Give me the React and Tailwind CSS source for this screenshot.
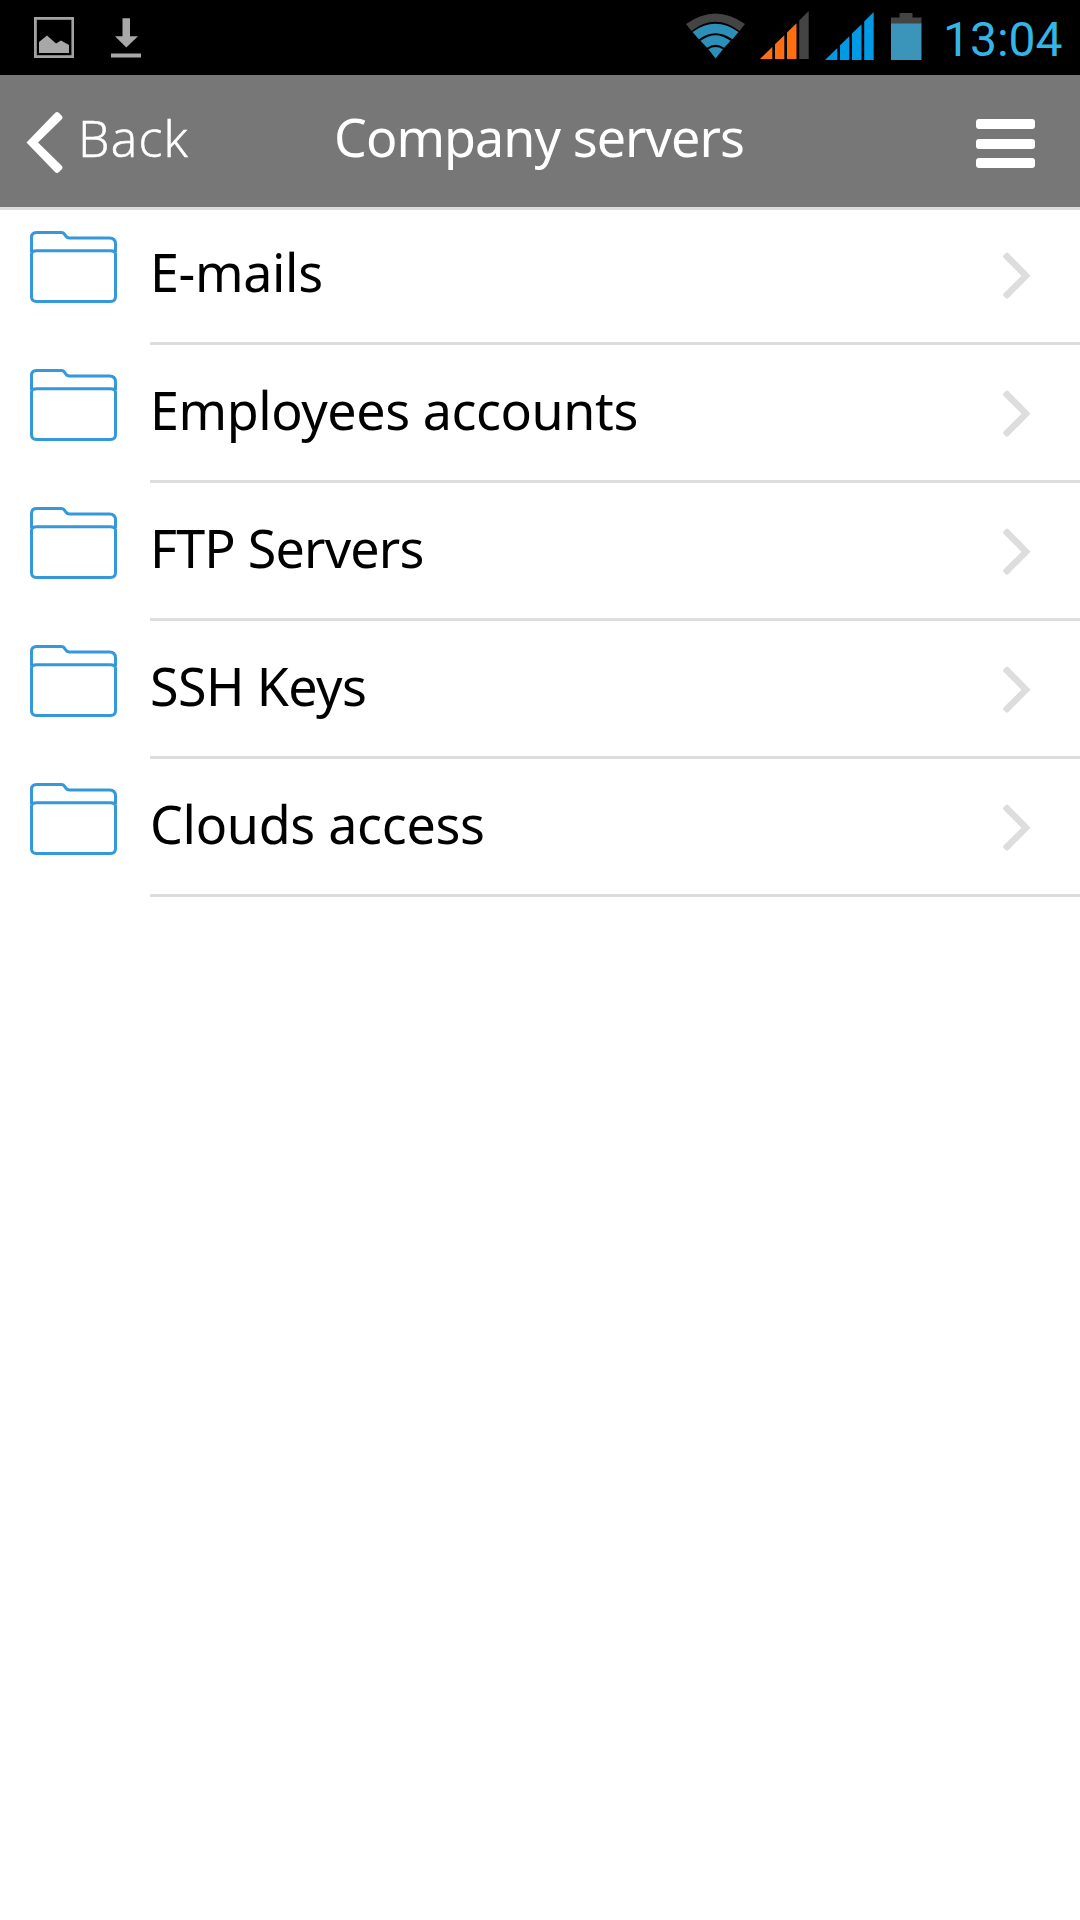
const FOLDERS = [
  { name: 'E-mails', tracking: 'tracking-[-0.35px]' },
  { name: 'Employees accounts', tracking: 'tracking-[-0.42px]' },
  { name: 'FTP Servers', tracking: 'tracking-[-0.8px]' },
  { name: 'SSH Keys', tracking: 'tracking-[-0.6px]' },
  { name: 'Clouds access', tracking: 'tracking-[-0.3px]' },
]

function PictureIcon() {
  return (
    <svg className="w-10 h-[41px]" viewBox="0 0 40 41">
      <rect x="1.4" y="1.4" width="37.4" height="38.2" fill="none" stroke="#a3a3a3" strokeWidth="2.8" />
      <path d="M5 25l8-6.5 9 8 5-3 8 4.5v8H5z" fill="#a8a8a8" />
    </svg>
  )
}

function DownloadIcon() {
  return (
    <svg className="w-[30px] h-[41px]" viewBox="0 0 30 41">
      <path d="M11.5 1.300H19v18h8L15.300 30.500 4 19.300h7.500zM0 36.500h30v4H0z" fill="#a8a8a8" />
    </svg>
  )
}

function WifiIcon() {
  return (
    <svg className="w-[60px] h-[46px]" viewBox="0 0 60 46">
      <path d="M0 11Q29.500-10 59 11l-5.500 7Q29.500-0.500 5.500 18z" fill="#444" />
      <g fill="#2b8fb8">
        <path d="M6.500 19Q29.500 2.500 52.500 19l-6 7.300Q29.500 14 12.800 26.300z" />
        <path d="M14.500 27.800Q29.500 16.500 44.500 27.800l-6.300 7Q29.500 28.500 21 34.800z" />
        <path d="M22.300 36.300Q29.500 31.500 37 36.300l-7.400 9.200z" />
      </g>
    </svg>
  )
}

function SignalIcon({ color, lastColor }) {
  return (
    <svg className="w-[49px] h-12" viewBox="0 0 49 48">
      <g fill={color}>
        <path d="M0 48L12.300 36V48z" />
        <path d="M15 33.300L24.300 24.200V48H15z" />
        <path d="M27 21.500L36.500 12.200V48H27z" />
      </g>
      <path d="M39.200 9.500L48.700 0V48h-9.500z" fill={lastColor} />
    </svg>
  )
}

function BatteryIcon() {
  return (
    <svg className="w-[31px] h-[47px]" viewBox="0 0 31 47">
      <path d="M0 4.500h8.500V0h13v4.500H30.500V11H0z" fill="#444" />
      <path d="M0 10.500h30.500V47H0z" fill="#3b94b9" />
    </svg>
  )
}

function FolderIcon() {
  return (
    <svg className="w-[87px] h-[72px]" viewBox="0 0 87 72" fill="none" stroke="#3498db" strokeWidth="3">
      <path d="M1.500 21V6.500Q1.500 1.500 6.500 1.500H31.500C36 1.500 34.500 7 39.500 7H79.500Q85.500 7 85.500 13V21" />
      <path d="M1.500 23Q2 19.800 6.500 19.800H80.500Q85 19.800 85.500 23V65.500Q85.500 70.500 80.500 70.500H6.500Q1.500 70.500 1.500 65.500z" />
    </svg>
  )
}

function StatusBar() {
  return (
    <div className="h-[75px] bg-black flex items-start">
      <div className="flex gap-[37px] pl-[34px] pt-[17px]">
        <PictureIcon />
        <DownloadIcon />
      </div>
      <div className="ml-auto flex items-start pr-[17px]">
        <div className="pt-[13px] mr-[14px]"><WifiIcon /></div>
        <div className="pt-[11px] mr-4"><SignalIcon color="#ff6f12" lastColor="#444" /></div>
        <div className="pt-3 mr-[17px]"><SignalIcon color="#0099e5" lastColor="#0099e5" /></div>
        <div className="pt-[13px] mr-[21px]"><BatteryIcon /></div>
        <span className="w-[120px] pt-2 font-['Roboto',sans-serif] text-[48px] leading-[64px] text-[#33b5e5] whitespace-nowrap">13:04</span>
      </div>
    </div>
  )
}

function Header() {
  return (
    <header className="h-[135px] bg-[#777] border-b-[3px] border-[#ddd] text-white grid grid-cols-[334px_1fr_104px] items-start">
      <button className="flex items-start pl-[26px] text-left">
        <svg className="w-[37px] h-[61px] mt-[37px] mr-[15px]" viewBox="0 0 37 61">
          <path d="M.500 30.500L29 1q2-2 4 0l2.500 2.500q2 2 0 4L12 30.500l23.500 23q2 2 0 4L33 60q-2 2-4 0z" fill="#fff" />
        </svg>
        <span className="pt-[26px] font-['Open_Sans',sans-serif] font-light text-[50px] leading-[74px] tracking-[1.3px] [-webkit-text-stroke:0.6px_white]">Back</span>
      </button>
      <h1 className="pt-[25px] text-[52px] leading-[74px] tracking-[-0.95px] whitespace-nowrap">Company servers</h1>
      <button className="mt-11 w-[59px] flex flex-col gap-[9.5px]">
        <span className="h-[10px] w-full rounded-[3px] bg-white" />
        <span className="h-[10px] w-full rounded-[3px] bg-white" />
        <span className="h-[10px] w-full rounded-[3px] bg-white" />
      </button>
    </header>
  )
}

function FolderRow({ name, tracking }) {
  return (
    <li className="h-[138px] flex items-start pl-[30px]">
      <div className="w-[120px] pt-6"><FolderIcon /></div>
      <div className="flex-1 h-full border-b-[3px] border-[#ddd] flex items-start justify-between pr-[49px]">
        <span className={`pt-7 text-[52px] leading-[74px] whitespace-nowrap ${tracking}`}>{name}</span>
        <svg className="w-7 h-[48px] mt-[45px]" viewBox="0 0 28 48">
          <path d="M27.500 23.700L5.500 1.200q-1.500-1.500-3 0L.8 3q-1.500 1.500 0 3l17.700 17.700L.8 41.300q-1.500 1.500 0 3L2.500 46q1.500 1.500 3 0z" fill="#ddd" />
        </svg>
      </div>
    </li>
  )
}

export default function App() {
  return (
    <div className="w-[1080px] h-[1920px] overflow-hidden bg-white text-black font-['Noto_Sans',sans-serif]">
      <StatusBar />
      <Header />
      {/* the first row tucks under the header border */}
      <ul className="-mt-[3px]">
        {FOLDERS.map(f => <FolderRow key={f.name} {...f} />)}
      </ul>
    </div>
  )
}
